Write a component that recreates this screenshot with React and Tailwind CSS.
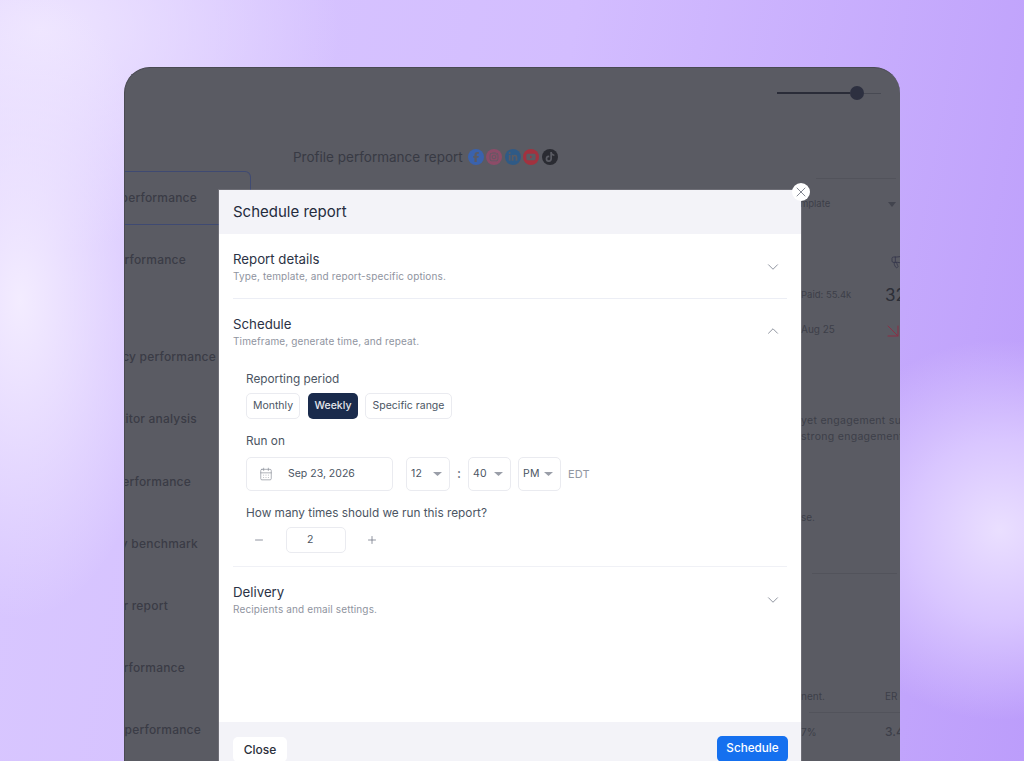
import { ArrowDownRight, CalendarDays, ChevronDown, ChevronUp, Megaphone, Minus, Plus, X } from 'lucide-react';
import { FaFacebookF, FaInstagram, FaLinkedinIn, FaTiktok, FaYoutube } from 'react-icons/fa6';

const sidebarRows = [
  { label: 'Page performance', cls: 'h-[62.2px] pr-[65px] mt-[4px]' },
  { label: 'Agency performance', cls: 'h-[62.2px] pr-[35px] mt-[35px]' },
  { label: 'Competitor analysis', cls: 'h-[62.2px] pr-[54px]' },
  { label: 'Post performance', cls: 'h-[62.2px] pr-[60px]' },
  { label: 'Industry benchmark', cls: 'h-[62.2px] pr-[53px]' },
  { label: 'Cover report', cls: 'h-[62.2px] pr-[83px]' },
  { label: 'Page performance', cls: 'h-[62.2px] pr-[66px]' },
  { label: 'Story performance', cls: 'h-[62.2px] pr-[50px]' },
];

const socials = [
  { Icon: FaFacebookF, cls: 'bg-[#3a62ad]' },
  { Icon: FaInstagram, cls: 'bg-[#8c4c68]' },
  { Icon: FaLinkedinIn, cls: 'bg-[#2f5a86]' },
  { Icon: FaYoutube, cls: 'bg-[#a2323f]' },
  { Icon: FaTiktok, cls: 'bg-[#2a2b32]' },
];

function Caret() {
  return (
    <svg width="9" height="4" viewBox="0 0 9 4" className="shrink-0">
      <polygon points="0,0 9,0 4.5,4" fill="#9a9ea8" />
    </svg>
  );
}

function TimeSelect({ value, width }) {
  return (
    <div className={`flex h-[34px] items-center justify-between rounded-[5px] border border-[#eaebf0] pl-[4px] pr-[7px] text-[10.5px] tracking-[0.2px] text-[#4b5563] ${width}`}>
      <span>{value}</span>
      <Caret />
    </div>
  );
}

function SectionHead({ title, sub, open }) {
  return (
    <div className="flex items-center justify-between pr-[5px]">
      <div>
        <div className="text-[13.25px] leading-[20px] text-[#2b3245]">{title}</div>
        <div className="text-[10px] leading-[14px] tracking-[0.13px] text-[#8f94a0]">{sub}</div>
      </div>
      {open ? (
        <ChevronUp size={18} strokeWidth={1} className="text-[#6b7280]" />
      ) : (
        <ChevronDown size={18} strokeWidth={1} className="mt-[2px] text-[#6b7280]" />
      )}
    </div>
  );
}

export default function App() {
  return (
    <div
      className="h-[761px] w-[1024px] overflow-hidden pl-[124px] pt-[67px] font-['Inter',sans-serif] bg-[radial-gradient(circle_at_1000px_530px,#eadfff_0px,#d9c6ff_90px,transparent_190px),radial-gradient(ellipse_150px_320px_at_20px_300px,#f3ecff_0%,transparent_100%),radial-gradient(ellipse_300px_220px_at_40px_30px,#eee5ff_0%,transparent_100%),linear-gradient(100deg,#d9c8ff_0%,#d3bdff_50%,#bc9dfb_100%)]"
    >
      {/* dimmed report page behind the dialog */}
      <div className="relative h-[720px] w-[776px] overflow-hidden rounded-t-[26px] border-l border-t border-[#494a52] bg-[#5a5b63] text-[#3a3c46]">
        <div className="flex h-[50px] items-center justify-end pr-[19px]">
          <div className="h-[2px] w-[73px] bg-[#2a2c38]" />
          <div className="h-[14px] w-[14px] rounded-full bg-[#2d3040]" />
          <div className="h-px w-[17px] bg-[#484a53]" />
        </div>

        <div className="flex">
          <div className="w-[126px] shrink-0">
            <div className="mt-[53px] flex h-[54px] items-center justify-end whitespace-nowrap rounded-tr-[6px] border-r border-t border-b border-[#3f4a72] pr-[53px] text-[12px] font-medium tracking-[0.2px]">
              Profile performance
            </div>
            {sidebarRows.map((row) => (
              <div key={row.cls} className={`flex items-center justify-end whitespace-nowrap text-[12px] font-medium tracking-[0.2px] ${row.cls}`}>
                {row.label}
              </div>
            ))}
          </div>

          <div className="flex min-w-0 flex-1 flex-col">
            <div className="ml-[42px] mt-[28px] flex h-[22px] items-center">
              <span className="text-[13.5px] text-[#383a44]">Profile performance report</span>
              <div className="ml-[5px] flex gap-[2.5px]">
                {socials.map(({ Icon, cls }) => (
                  <div key={cls} className={`flex h-[16px] w-[16px] items-center justify-center rounded-full text-[#5a5b63] ${cls}`}>
                    <Icon size={10} />
                  </div>
                ))}
              </div>
            </div>

            <div className="ml-auto w-[99px] text-[10px] leading-4 text-[#3d3f49]">
              <div className="ml-[15px] mr-[4px] mt-[10px] h-px bg-[#52535b]" />
              <div className="mt-[17px] flex h-4 items-center justify-between pr-[4px]">
                <span className="-ml-[12px] text-[9.5px]">Template</span>
                <svg width="8" height="5" viewBox="0 0 8 5"><polygon points="0,0 8,0 4,5" fill="#42444e" /></svg>
              </div>
              <div className="mt-[41px] flex h-4">
                <div className="w-[89px] shrink-0" />
                <Megaphone size={16} strokeWidth={1.2} className="shrink-0 text-[#33354a]" />
              </div>
              <div className="mt-[14px] flex h-6 items-center">
                <div className="w-[84px] shrink-0 whitespace-nowrap text-[9.5px]">Paid: 55.4k</div>
                <div className="text-[17px] text-[#2d2f38]">32</div>
              </div>
              <div className="mt-[14px] flex h-4 items-center">
                <div className="w-[80px] shrink-0">Aug 25</div>
                <ArrowDownRight size={24} strokeWidth={1} className="mt-[4px] shrink-0 text-[#8a2f45]" />
              </div>
              <div className="mt-[76px] whitespace-nowrap text-[10.5px] tracking-[0.3px]">yet engagement surged</div>
              <div className="whitespace-nowrap text-[10.5px] tracking-[0.3px]">strong engagement rate</div>
              <div className="mt-[64px]">se.</div>
              <div className="ml-[11px] mr-[3px] mt-[48px] h-px bg-[#52535b]" />
              <div className="mt-[114px] flex h-4">
                <div className="w-[84px] shrink-0">nent.</div>
                <div>ER</div>
              </div>
              <div className="ml-[8px] mt-[8px] h-px bg-[#52535b]" />
              <div className="mt-[11px] flex h-4">
                <div className="w-[84px] shrink-0">7%</div>
                <div className="text-[12px] font-medium">3.4</div>
              </div>
            </div>
          </div>
        </div>

        {/* dialog */}
        <div className="absolute left-[94px] top-[122px] flex h-[590px] w-[582px] flex-col bg-white shadow-[0_0_0_1px_rgba(255,255,255,0.12)]">
          <button className="absolute -right-[9px] -top-[7px] flex h-[18px] w-[18px] items-center justify-center rounded-full bg-white text-[#7b7f8a]">
            <X size={16} strokeWidth={1.4} />
          </button>

          <div className="flex h-[44px] shrink-0 items-center bg-[#f3f3f8] px-[14px] text-[15px] text-[#242b3d]">
            Schedule report
          </div>

          <div className="flex-1 px-[14px]">
            <div className="border-b border-[#eceef5] pb-[15px] pt-[15px]">
              <SectionHead title="Report details" sub="Type, template, and report-specific options." />
            </div>

            <div className="border-b border-[#f0f1f6] pb-[13px] pt-[15px]">
              <SectionHead title="Schedule" sub="Timeframe, generate time, and repeat." open />
              <div className="pl-[13px] text-[#4b5563]">
                <div className="mt-[23px] text-[11.8px] leading-4">Reporting period</div>
                <div className="mt-[6px] flex h-[26px] text-[10.5px]">
                  <div className="flex w-[54px] items-center justify-center rounded-[5px] border border-[#eaebf0]">Monthly</div>
                  <div className="ml-[8px] flex w-[50px] items-center justify-center rounded-[5px] bg-[#1a2b4c] font-medium text-[#e5e7eb]">Weekly</div>
                  <div className="ml-[7px] flex w-[87px] items-center justify-center rounded-[5px] border border-[#eaebf0]">Specific range</div>
                </div>

                <div className="mt-[14px] text-[11.8px] leading-4">Run on</div>
                <div className="mt-[8px] flex items-center">
                  <div className="flex h-[34px] w-[147px] items-center rounded-[5px] border border-[#eaebf0] pl-[12px] text-[10.5px]">
                    <CalendarDays size={14} strokeWidth={1.2} className="text-[#8b8f99]" />
                    <span className="ml-[15px]">Sep 23, 2026</span>
                  </div>
                  <div className="w-[13px]" />
                  <TimeSelect value="12" width="w-[44px]" />
                  <div className="w-[18px] text-center text-[13px] font-medium">:</div>
                  <TimeSelect value="40" width="w-[43px]" />
                  <div className="w-[7px]" />
                  <TimeSelect value="PM" width="w-[43px]" />
                  <span className="ml-[7px] text-[11px] tracking-[0.2px] text-[#9297a2]">EDT</span>
                </div>

                <div className="mt-[14px] text-[11.8px] leading-4">How many times should we run this report?</div>
                <div className="mt-[6px] flex h-[26px] items-center">
                  <div className="flex w-[26px] justify-center text-[#6b7280]"><Minus size={12} strokeWidth={1.5} /></div>
                  <div className="ml-[14px] flex h-[26px] w-[60px] items-center rounded-[5px] border border-[#eaebf0] pl-[20px] text-[10.5px]">2</div>
                  <div className="flex w-[52px] justify-center text-[#6b7280]"><Plus size={12} strokeWidth={1.5} /></div>
                </div>
              </div>
            </div>

            <div className="pt-[15px]">
              <SectionHead title="Delivery" sub="Recipients and email settings." />
            </div>
          </div>

          <div className="flex h-[58px] shrink-0 items-start justify-between bg-[#f3f3f8] pl-[14px] pr-[13px] pt-[14px]">
            <button className="mt-[1px] h-[25px] w-[54px] rounded-[5px] bg-white text-[12px] font-medium text-[#2b2f3a]">Close</button>
            <button className="h-[26px] w-[71px] rounded-[5px] bg-[#1570ef] text-[11.7px] font-medium text-white">Schedule</button>
          </div>
        </div>
      </div>
    </div>
  );
}
